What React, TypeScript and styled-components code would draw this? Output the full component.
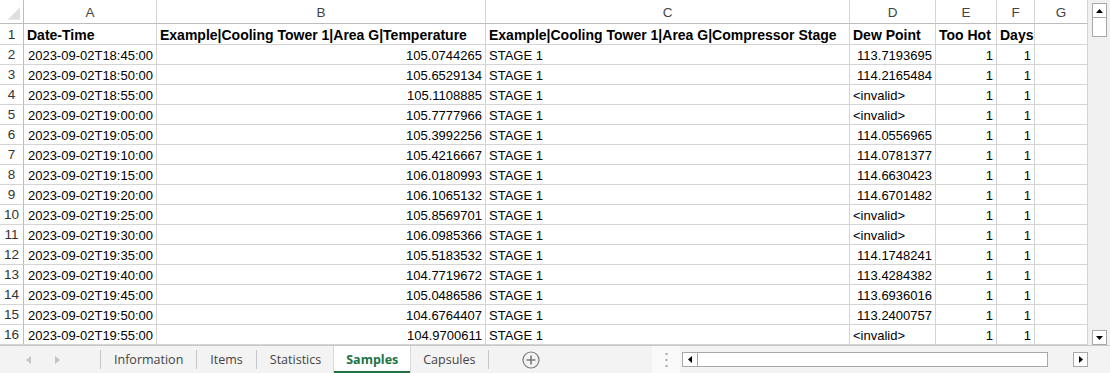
import React from 'react';
import styled, { createGlobalStyle } from 'styled-components';

const GlobalStyle = createGlobalStyle`
  html, body {
    margin: 0;
    padding: 0;
    background: #ffffff;
  }
  body {
    font-family: 'Liberation Sans', Arial, sans-serif;
  }
`;

const COLS = [24, 133, 329, 364, 86, 61, 38, 53];
const LETTERS = ['A', 'B', 'C', 'D', 'E', 'F', 'G'];

const HEADERS = [
  'Date-Time',
  'Example|Cooling Tower 1|Area G|Temperature',
  'Example|Cooling Tower 1|Area G|Compressor Stage',
  'Dew Point',
  'Too Hot',
  'Days',
];

const rows: Array<[string, string, string]> = [
  ['18:45:00', '105.0744265', '113.7193695'],
  ['18:50:00', '105.6529134', '114.2165484'],
  ['18:55:00', '105.1108885', '<invalid>'],
  ['19:00:00', '105.7777966', '<invalid>'],
  ['19:05:00', '105.3992256', '114.0556965'],
  ['19:10:00', '105.4216667', '114.0781377'],
  ['19:15:00', '106.0180993', '114.6630423'],
  ['19:20:00', '106.1065132', '114.6701482'],
  ['19:25:00', '105.8569701', '<invalid>'],
  ['19:30:00', '106.0985366', '<invalid>'],
  ['19:35:00', '105.5183532', '114.1748241'],
  ['19:40:00', '104.7719672', '113.4284382'],
  ['19:45:00', '105.0486586', '113.6936016'],
  ['19:50:00', '104.6764407', '113.2400757'],
  ['19:55:00', '104.9700611', '<invalid>'],
];

const TABS = ['Information', 'Items', 'Statistics', 'Samples', 'Capsules'];
const ACTIVE = 'Samples';

const App: React.FC = () => {
  return (
    <Window>
      <GlobalStyle />
      <Main>
        <Sheet>
          <Corner>
            <svg width="24" height="24" viewBox="0 0 24 24">
              <polygon points="21,7 21,20 8,20" fill="#dfdfdf" />
            </svg>
          </Corner>
          {LETTERS.map(l => (
            <ColHead key={l}>{l}</ColHead>
          ))}

          <RowHead>1</RowHead>
          {HEADERS.map(h => (
            <Cell key={h} $bold>
              {h}
            </Cell>
          ))}
          <Cell />

          {rows.map(([time, temp, dew], i) => {
            const invalid = dew.startsWith('<');
            return (
              <React.Fragment key={time}>
                <RowHead>{i + 2}</RowHead>
                <Cell $align="right">2023-09-02T{time}</Cell>
                <Cell $align="right">{temp}</Cell>
                <Cell>STAGE 1</Cell>
                <Cell $align={invalid ? 'left' : 'right'}>{dew}</Cell>
                <Cell $align="right">1</Cell>
                <Cell $align="right">1</Cell>
                <Cell />
              </React.Fragment>
            );
          })}
        </Sheet>

        <VScroll>
          <ScrollBtn>
            <svg width="7" height="4" viewBox="0 0 7 4">
              <polygon points="0,4 3.5,0 7,4" fill="#000" />
            </svg>
          </ScrollBtn>
          <VThumb />
          <Spacer />
          <ScrollBtn>
            <svg width="7" height="4" viewBox="0 0 7 4">
              <polygon points="0,0 3.5,4 7,0" fill="#000" />
            </svg>
          </ScrollBtn>
        </VScroll>
      </Main>

      <TabBar>
        <TabArea>
          <NavArea>
            <svg width="5" height="8" viewBox="0 0 5 8">
              <polygon points="5,0 0,4 5,8" fill="#c4c4c4" />
            </svg>
            <svg width="5" height="8" viewBox="0 0 5 8">
              <polygon points="0,0 5,4 0,8" fill="#c4c4c4" />
            </svg>
          </NavArea>
          <Sep />
          {TABS.map((t, i) => {
            const active = t === ACTIVE;
            const nextActive = TABS[i + 1] === ACTIVE;
            return (
              <React.Fragment key={t}>
                <Tab $active={active}>{t}</Tab>
                {!active && !nextActive && <Sep />}
              </React.Fragment>
            );
          })}
          <AddBtn>
            <svg width="18" height="18" viewBox="0 0 18 18">
              <circle cx="9" cy="9" r="8" fill="none" stroke="#7a7a7a" strokeWidth="1.2" />
              <path d="M9 4.5v9M4.5 9h9" stroke="#7a7a7a" strokeWidth="1.6" />
            </svg>
          </AddBtn>
        </TabArea>
        <Grip>
          <svg width="3" height="14" viewBox="0 0 3 14">
            <rect x="0.5" y="0" width="2" height="2" fill="#a6a6a6" />
            <rect x="0.5" y="6" width="2" height="2" fill="#a6a6a6" />
            <rect x="0.5" y="12" width="2" height="2" fill="#a6a6a6" />
          </svg>
        </Grip>
        <HScroll>
          <ScrollBtn $joined>
            <svg width="4" height="7" viewBox="0 0 4 7">
              <polygon points="4,0 0,3.5 4,7" fill="#000" />
            </svg>
          </ScrollBtn>
          <HThumb />
          <Spacer />
          <ScrollBtn>
            <svg width="4" height="7" viewBox="0 0 4 7">
              <polygon points="0,0 4,3.5 0,7" fill="#000" />
            </svg>
          </ScrollBtn>
        </HScroll>
      </TabBar>
    </Window>
  );
};

export default App;

const Window = styled.div`
  width: 1110px;
  height: 373px;
  display: flex;
  flex-direction: column;
  overflow: hidden;
  background: #ffffff;
  color: #000;
`;

const Main = styled.div`
  display: flex;
  height: 345px;
`;

const Sheet = styled.div`
  display: grid;
  grid-template-columns: ${COLS.map(c => `${c}px`).join(' ')};
  grid-template-rows: 24px 21px repeat(15, 20px);
  width: 1088px;
  font-size: 13px;
`;

const BaseCell = styled.div`
  box-sizing: border-box;
  border-right: 1px solid #d4d4d4;
  border-bottom: 1px solid #d4d4d4;
  white-space: nowrap;
  overflow: hidden;
  display: flex;
  align-items: center;
`;

const Corner = styled(BaseCell)`
  border-right-color: #bdbdbd;
  border-bottom-color: #bdbdbd;
  padding: 0;
  align-items: stretch;
`;

const ColHead = styled(BaseCell)`
  justify-content: center;
  color: #444;
  font-size: 13.5px;
  border-bottom-color: #bdbdbd;
  padding-top: 2px;
`;

const RowHead = styled(BaseCell)`
  justify-content: center;
  color: #333;
  font-size: 13.5px;
  border-right-color: #bdbdbd;
`;

const Cell = styled(BaseCell)<{ $align?: 'left' | 'right'; $bold?: boolean }>`
  justify-content: ${({ $align }) => ($align === 'right' ? 'flex-end' : 'flex-start')};
  padding: 1px 3px 0 3px;
  font-weight: ${({ $bold }) => ($bold ? 700 : 400)};
  font-size: ${({ $bold }) => ($bold ? '14px' : '13px')};
`;

const VScroll = styled.div`
  width: 22px;
  display: flex;
  flex-direction: column;
  align-items: flex-start;
  padding: 3px 0 0 4px;
  box-sizing: border-box;
  background: #f0f0f0;
`;

const ScrollBtn = styled.div<{ $joined?: boolean }>`
  box-sizing: border-box;
  width: 15px;
  height: 15px;
  border: 1px solid #a8a8a8;
  ${({ $joined }) => ($joined ? 'border-right: none;' : '')}
  background: #fff;
  display: flex;
  align-items: center;
  justify-content: center;
  flex-shrink: 0;
`;

const VThumb = styled.div`
  box-sizing: border-box;
  width: 15px;
  height: 20px;
  margin-top: -1px;
  border: 1px solid #a8a8a8;
  background: #fff;
`;

const Spacer = styled.div`
  flex: 1;
`;

const TabBar = styled.div`
  height: 28px;
  box-sizing: border-box;
  border-top: 1px solid #c8c8c8;
  background: #f3f3f3;
  display: flex;
  align-items: stretch;
  font-family: 'Open Sans', Lato, sans-serif;
  font-size: 12.5px;
  color: #444;
`;

const TabArea = styled.div`
  width: 652px;
  display: flex;
  align-items: center;
`;

const NavArea = styled.div`
  width: 100px;
  display: flex;
  align-items: center;
  gap: 24px;
  padding-left: 26px;
  box-sizing: border-box;
`;

const Sep = styled.div`
  width: 1px;
  height: 19px;
  background: #c6c6c6;
  flex-shrink: 0;
`;

const Tab = styled.div<{ $active?: boolean }>`
  align-self: stretch;
  display: flex;
  align-items: center;
  padding: 0 13px;
  box-sizing: border-box;
  ${({ $active }) =>
    $active
      ? `
    background: #fff;
    color: #217346;
    font-weight: 700;
    border-bottom: 2px solid #217346;
    padding: 2px 12px 0;
    box-shadow: -1px 0 0 #d8d8d8, 1px 0 0 #d8d8d8;
  `
      : ''}
`;

const AddBtn = styled.div`
  display: flex;
  align-items: center;
  margin-left: 33px;
`;

const Grip = styled.div`
  width: 28px;
  display: flex;
  align-items: center;
  justify-content: center;
  background: #f9f9f9;
`;

const HScroll = styled.div`
  flex: 1;
  display: flex;
  align-items: center;
  padding: 0 22px 0 2px;
`;

const HThumb = styled.div`
  box-sizing: border-box;
  width: 351px;
  height: 15px;
  border: 1px solid #a8a8a8;
  background: #fff;
`;
